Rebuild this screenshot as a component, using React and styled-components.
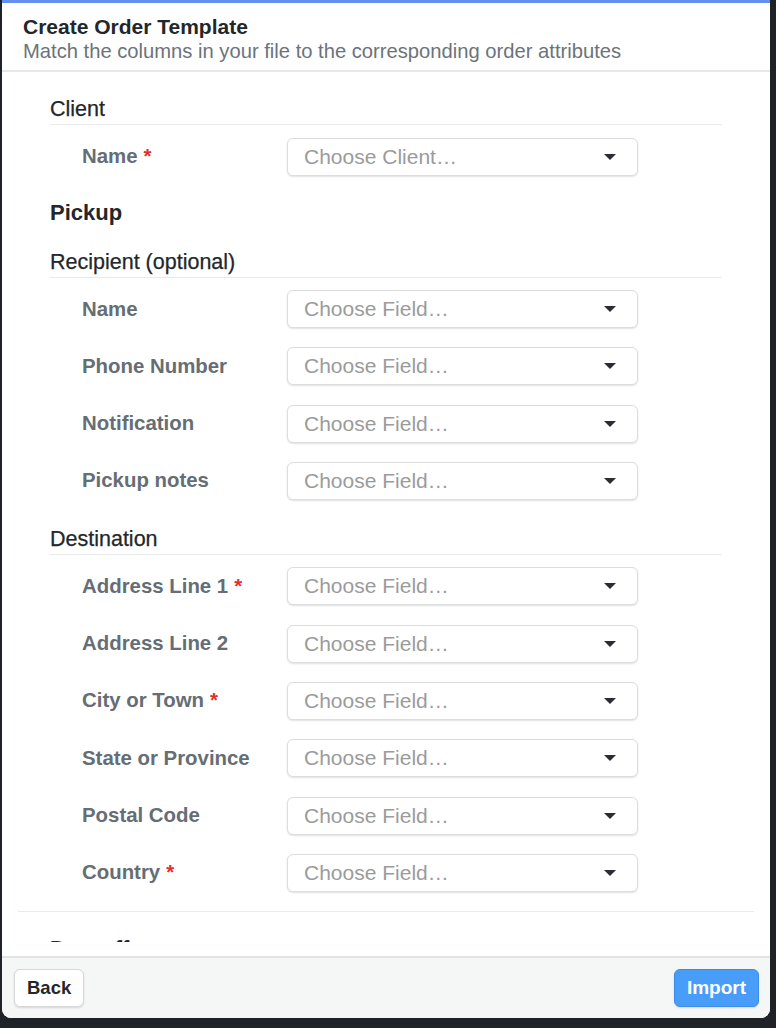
import React from "react"
import styled, { createGlobalStyle } from "styled-components"

const GlobalStyle = createGlobalStyle`
  html, body {
    margin: 0;
    padding: 0;
    background: #1f2226;
  }
  body {
    font-family: "Liberation Sans", Arial, sans-serif;
  }
`

const Page = styled.div`
  width: 776px;
  height: 1028px;
  padding-left: 2px;
  box-sizing: border-box;
  overflow: hidden;
`

const Modal = styled.div`
  width: 768px;
  height: 1018px;
  background: #fff;
  border-top: 3px solid #6690ef;
  border-radius: 0 0 9px 9px;
  box-sizing: border-box;
  display: flex;
  flex-direction: column;
  overflow: hidden;
`

const Header = styled.header`
  padding: 12px 21px 7px;
  border-bottom: 2px solid #e6e7e8;
`

const Title = styled.h1`
  margin: 0;
  font-size: 21px;
  line-height: 24px;
  font-weight: 700;
  color: #23272b;
`

const Subtitle = styled.p`
  margin: 0;
  font-size: 20.2px;
  line-height: 24px;
  color: #6b737b;
`

const Body = styled.div`
  flex: 1;
  min-height: 0;
  padding-bottom: 14px;
  display: flex;
  flex-direction: column;
`

const Scroll = styled.div`
  flex: 1;
  min-height: 0;
  overflow: hidden;
  padding: 0 16px;
`

const Group = styled.section`
  padding: ${(p) => (p.$first ? "24px 32px 19px" : "23px 32px 20px")};
  border-bottom: ${(p) => (p.$divided ? "1px solid #e8e9ea" : "none")};
`

const GroupTitle = styled.h2`
  margin: 0 0 22px;
  font-size: 22px;
  line-height: 28px;
  font-weight: 700;
  color: #23272b;
`

const Section = styled.div`
  margin-bottom: ${(p) => p.$gap ?? 23.5}px;
  &:last-child {
    margin-bottom: 0;
  }
`

const SectionTitle = styled.h3`
  margin: 0 0 12.5px;
  padding-bottom: 2px;
  font-size: 21.5px;
  line-height: 26px;
  font-weight: 400;
  color: #23272b;
  -webkit-text-stroke: 0.25px #23272b;
  border-bottom: 1px solid #e8e9ea;
`

const Rows = styled.div`
  display: flex;
  flex-direction: column;
  gap: 19.3px;
  padding-left: 32px;
`

const Row = styled.div`
  display: grid;
  grid-template-columns: 205px 351px;
  align-items: center;
`

const Label = styled.label`
  font-size: 20.4px;
  font-weight: 700;
  color: #656d75;
`

const Required = styled.span`
  color: #e0302a;
  margin-left: 6px;
`

const Select = styled.button`
  height: 38px;
  box-sizing: border-box;
  display: flex;
  align-items: center;
  justify-content: space-between;
  padding: 0 21px 0 16px;
  background: #fff;
  border: 1px solid #dcdddf;
  border-radius: 6px;
  box-shadow: 0 1px 2px rgba(0, 0, 0, 0.12);
  font-family: inherit;
  font-size: 21px;
  color: #9b9b9b;
  cursor: pointer;
`

const Caret = styled.span`
  width: 0;
  height: 0;
  border-left: 6px solid transparent;
  border-right: 6px solid transparent;
  border-top: 6px solid #2a2d31;
`

const Footer = styled.footer`
  display: flex;
  justify-content: space-between;
  align-items: center;
  padding: 11px 11px 11px 12px;
  background: #f5f6f6;
  border-top: 2px solid #e2e3e4;
`

const Button = styled.button`
  height: 38px;
  padding: 0 12px;
  border-radius: 6px;
  border: 1px solid ${(p) => (p.$primary ? "#3d8de6" : "#d6d7d9")};
  background: ${(p) => (p.$primary ? "#479df7" : "#fff")};
  color: ${(p) => (p.$primary ? "#fff" : "#23272b")};
  box-shadow: 0 1px 2px rgba(0, 0, 0, 0.12);
  font-family: inherit;
  font-size: ${(p) => (p.$primary ? "19px" : "18.5px")};
  font-weight: 700;
  cursor: pointer;
`

const recipient = [
  { label: "Name" },
  { label: "Phone Number" },
  { label: "Notification" },
  { label: "Pickup notes" },
]

const destination = [
  { label: "Address Line 1", required: true },
  { label: "Address Line 2" },
  { label: "City or Town", required: true },
  { label: "State or Province" },
  { label: "Postal Code" },
  { label: "Country", required: true },
]

const FieldRow = ({ label, required, placeholder = "Choose Field…" }) => (
  <Row>
    <Label>
      {label}
      {required ? <Required>*</Required> : null}
    </Label>
    <Select type="button">
      <span>{placeholder}</span>
      <Caret />
    </Select>
  </Row>
)

export default function App() {
  return (
    <>
      <GlobalStyle />
      <Page>
        <Modal>
          <Header>
            <Title>Create Order Template</Title>
            <Subtitle>Match the columns in your file to the corresponding order attributes</Subtitle>
          </Header>
          <Body>
            <Scroll>
              <Group $first $divided>
                <Section $gap={23}>
                  <SectionTitle>Client</SectionTitle>
                  <Rows>
                    <FieldRow label="Name" required placeholder="Choose Client…" />
                  </Rows>
                </Section>
                <GroupTitle>Pickup</GroupTitle>
                <Section $gap={26}>
                  <SectionTitle>Recipient (optional)</SectionTitle>
                  <Rows>
                    {recipient.map((f) => (
                      <FieldRow key={f.label} {...f} />
                    ))}
                  </Rows>
                </Section>
                <Section>
                  <SectionTitle>Destination</SectionTitle>
                  <Rows>
                    {destination.map((f) => (
                      <FieldRow key={f.label} {...f} />
                    ))}
                  </Rows>
                </Section>
              </Group>
              <Group>
                <GroupTitle>Dropoff</GroupTitle>
              </Group>
            </Scroll>
          </Body>
          <Footer>
            <Button type="button">Back</Button>
            <Button type="button" $primary>Import</Button>
          </Footer>
        </Modal>
      </Page>
    </>
  )
}
